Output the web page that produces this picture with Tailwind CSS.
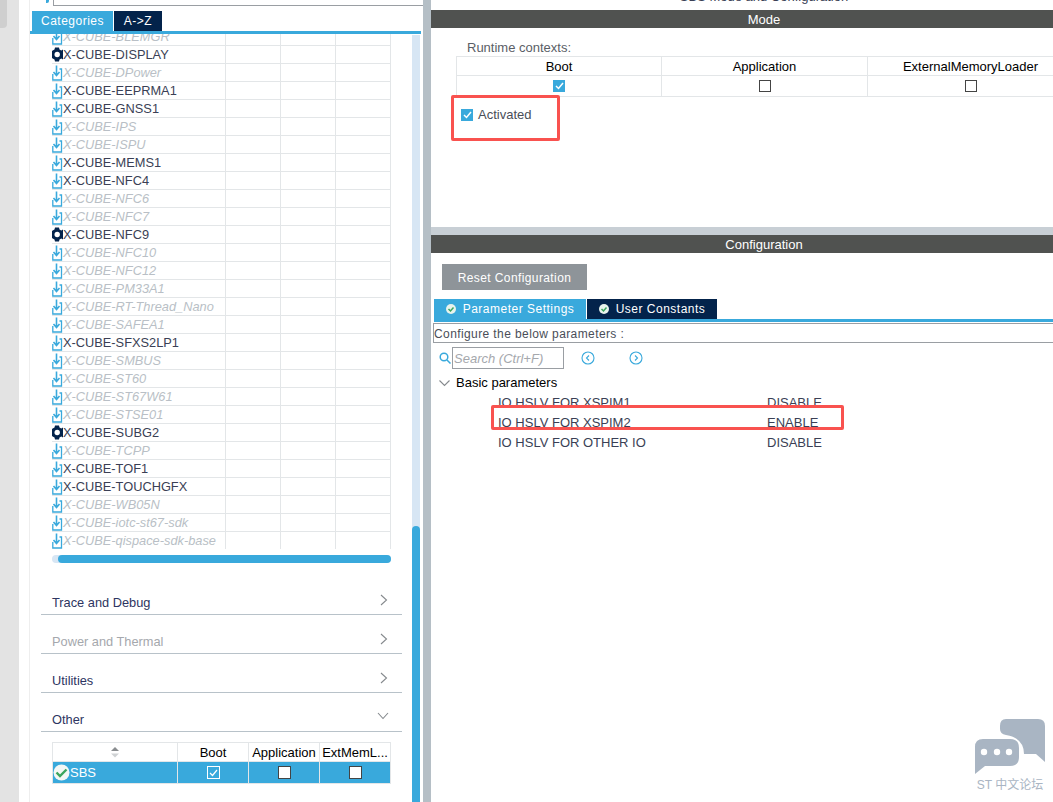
<!DOCTYPE html>
<html lang="en">
<head>
  <meta charset="UTF-8" />
  <title>SBS Mode and Configuration</title>
  <script src="https://cdn.jsdelivr.net/npm/@tailwindcss/browser@4"></script>
</head>
<body class="bg-white">
  <div class="relative flex h-[802px] w-[1053px] overflow-hidden bg-white text-[13px] text-[#3a3f55] font-['Liberation_Sans',Arial,sans-serif]">

    <!-- left gutter -->
    <div class="w-[19px] shrink-0 bg-[#e3e3e3]">
      <div class="h-[28px] w-[7px] rounded-br-[4px] bg-[#cfcfcf]"></div>
    </div>

    <!-- component panel -->
    <div class="relative w-[404px] shrink-0 bg-white">
      <div class="absolute left-[10px] top-0 h-full w-[1px] bg-[#eeeeee]"></div>
      <div class="absolute left-[27px] top-0 h-[3px] w-[3px] rounded-br-[2px] bg-[#39a9dc]"></div>
      <div class="ml-[34px] h-[6px] border-b border-l border-[#9a9ea3]"></div>

      <div class="ml-[13px] mt-[5px] flex h-[20px] gap-[1px] text-[12px] tracking-[0.5px] text-white">
        <div class="flex w-[81px] items-center justify-center bg-[#39a9dc]">Categories</div>
        <div class="flex w-[48px] items-center justify-center bg-[#03234b]">A-&gt;Z</div>
      </div>
      <div class="ml-[11px] h-[3px] w-[391px] bg-[#39a9dc]"></div>

      <div class="relative h-[515px] overflow-hidden">
        <div id="packs" class="ml-[33px] mt-[-6px] w-[339px]"></div>
        <div class="absolute right-[3px] top-[1px] h-full w-[8px] bg-[#d7e6f4]"></div>
      </div>

      <div class="ml-[33px] mt-[6px] h-[8px] w-[339px] rounded-[4px] bg-[#d7e6f4] pl-[6px]">
        <div class="h-full rounded-[4px] bg-[#39a9dc]"></div>
      </div>

      <div class="ml-[22px] mt-[24px] w-[361px] text-[12.8px]">
        <div class="flex h-[28px] items-center justify-between border-b border-[#b8c2c9] pb-[1px] pl-[11px] pr-[14px] pt-[6px] text-[#2d3561]">
          <span>Trace and Debug</span>
          <svg width="8" height="12" viewBox="0 0 8 12" fill="none" stroke="#85898d" stroke-width="1.1" class="mt-[-7px]"><path d="M1 1l5.5 5L1 11"/></svg>
        </div>
        <div class="mt-[11px] flex h-[28px] items-center justify-between border-b border-[#b8c2c9] pb-[1px] pl-[11px] pr-[14px] pt-[6px] text-[#a5a8ad]">
          <span>Power and Thermal</span>
          <svg width="8" height="12" viewBox="0 0 8 12" fill="none" stroke="#85898d" stroke-width="1.1" class="mt-[-7px]"><path d="M1 1l5.5 5L1 11"/></svg>
        </div>
        <div class="mt-[11px] flex h-[28px] items-center justify-between border-b border-[#b8c2c9] pb-[1px] pl-[11px] pr-[14px] pt-[6px] text-[#2d3561]">
          <span>Utilities</span>
          <svg width="8" height="12" viewBox="0 0 8 12" fill="none" stroke="#85898d" stroke-width="1.1" class="mt-[-7px]"><path d="M1 1l5.5 5L1 11"/></svg>
        </div>
        <div class="mt-[11px] flex h-[28px] items-center justify-between border-b border-[#b8c2c9] pb-[1px] pl-[11px] pr-[13px] pt-[6px] text-[#2d3561]">
          <span>Other</span>
          <svg width="12" height="8" viewBox="0 0 12 8" fill="none" stroke="#85898d" stroke-width="1.1" class="mt-[-8px]"><path d="M1 1l5 5.5L11 1"/></svg>
        </div>
      </div>

      <!-- runtime table for the selected component -->
      <div class="ml-[33px] mt-[10px] w-[339px] border border-[#e3e6e8] text-black">
        <div class="grid h-[19px] grid-cols-[125px_71px_71px_1fr] border-b border-[#e3e6e8]">
          <div class="flex items-center justify-center border-r border-[#e3e6e8]">
            <svg width="8" height="11" viewBox="0 0 8 11"><path d="M4 0l4 4H0z" fill="#8a8d90"/><path d="M0 6.500h8L4 10.500z" fill="#cfd2d4"/></svg>
          </div>
          <div class="flex items-center justify-center border-r border-[#e3e6e8]">Boot</div>
          <div class="flex items-center justify-center border-r border-[#e3e6e8]">Application</div>
          <div class="flex items-center justify-center">ExtMemL...</div>
        </div>
        <div class="grid h-[21px] grid-cols-[125px_71px_71px_1fr] bg-[#39a9dc]">
          <div class="flex items-center border-r border-[#e3e6e8] text-white">
            <svg width="17" height="17" viewBox="0 0 17 17" class="shrink-0"><circle cx="8.500" cy="8.500" r="8" fill="#f4f7f5"/><path d="M3.500 8.500l3.500 3.500 6.500-6.500" fill="none" stroke="#3ba55d" stroke-width="2.400"/></svg>
            <span>SBS</span>
          </div>
          <div class="flex items-center justify-center border-r border-[#e3e6e8]">
            <div class="flex h-[13px] w-[13px] items-center justify-center border border-white bg-[#39a9dc]">
              <svg width="9" height="8" viewBox="0 0 9 8" fill="none" stroke="#fff" stroke-width="1.200"><path d="M1 4l2.500 2.500L8 1"/></svg>
            </div>
          </div>
          <div class="flex items-center justify-center border-r border-[#e3e6e8]">
            <div class="h-[13px] w-[13px] border border-[#444] bg-white"></div>
          </div>
          <div class="flex items-center justify-center">
            <div class="h-[13px] w-[13px] border border-[#444] bg-white"></div>
          </div>
        </div>
      </div>

      <div class="absolute bottom-0 right-[3px] h-[276px] w-[8px] rounded-t-[4px] bg-[#39a9dc]"></div>
    </div>

    <!-- divider -->
    <div class="w-[7px] shrink-0 bg-[#b5bfc6]"></div>

    <!-- right side, wider than the window: its right edge is cut off -->
    <div class="relative w-[623px] shrink-0 overflow-hidden border-l border-[#b5bfc6] bg-white">
      <div class="w-[666px]">
        <div class="h-[10px] overflow-hidden text-center text-[13px] leading-[14px] text-[#3a3f55]"><div class="mt-[-10px]">SBS Mode and Configuration</div></div>
        <div class="flex h-[18px] items-center justify-center bg-[#505250] pt-[1px] text-white">Mode</div>

        <div class="ml-[36px] mt-[12px] h-[16px] leading-[16px] text-[#5a5e66]">Runtime contexts:</div>
        <div class="ml-[25px] w-[617px] border-y border-l border-[#e3e6e8] text-black">
          <div class="grid h-[19px] grid-cols-[205px_206px_1fr] border-b border-[#e3e6e8]">
            <div class="flex items-center justify-center border-r border-[#e3e6e8]">Boot</div>
            <div class="flex items-center justify-center border-r border-[#e3e6e8]">Application</div>
            <div class="flex items-center justify-center">ExternalMemoryLoader</div>
          </div>
          <div class="grid h-[20px] grid-cols-[205px_206px_1fr]">
            <div class="flex items-center justify-center border-r border-[#e3e6e8]">
              <div class="flex h-[12px] w-[12px] items-center justify-center bg-[#39a9dc]">
                <svg width="9" height="8" viewBox="0 0 9 8" fill="none" stroke="#fff" stroke-width="1.500"><path d="M1 4l2.500 2.500L8 1"/></svg>
              </div>
            </div>
            <div class="flex items-center justify-center border-r border-[#e3e6e8]">
              <div class="h-[12px] w-[12px] border border-[#444]"></div>
            </div>
            <div class="flex items-center justify-center">
              <div class="h-[12px] w-[12px] border border-[#444]"></div>
            </div>
          </div>
        </div>
        <div class="ml-[30px] mt-[11px] flex h-[14px] items-center gap-[5px] text-[#4a4e58]">
          <div class="flex h-[12px] w-[12px] items-center justify-center bg-[#39a9dc]">
            <svg width="9" height="8" viewBox="0 0 9 8" fill="none" stroke="#fff" stroke-width="1.500"><path d="M1 4l2.500 2.500L8 1"/></svg>
          </div>
          <span>Activated</span>
        </div>

        <div class="mt-[105px] h-[8px] bg-[#c8cfd5]"></div>
        <div class="flex h-[18px] items-center justify-center bg-[#505250] pt-[1px] text-white">Configuration</div>

        <div class="ml-[11px] mt-[11px] flex h-[26px] w-[145px] items-center justify-center bg-[#8e9499] pt-[1px] text-[12px] tracking-[0.4px] text-white">Reset Configuration</div>

        <div class="ml-[3px] mt-[9px] flex h-[20px] gap-[1px] text-[12px] tracking-[0.5px] text-white">
          <div class="flex w-[152px] items-center justify-center gap-[7px] bg-[#39a9dc]">
            <svg width="10" height="10" viewBox="0 0 10 10"><circle cx="5" cy="5" r="5" fill="#e8f3ec"/><path d="M2.500 5l2 2 3-3.500" fill="none" stroke="#3ba55d" stroke-width="1.500"/></svg>
            <span>Parameter Settings</span>
          </div>
          <div class="flex w-[130px] items-center justify-center gap-[7px] bg-[#03234b]">
            <svg width="10" height="10" viewBox="0 0 10 10"><circle cx="5" cy="5" r="5" fill="#e8f3ec"/><path d="M2.500 5l2 2 3-3.500" fill="none" stroke="#3ba55d" stroke-width="1.500"/></svg>
            <span>User Constants</span>
          </div>
        </div>
        <div class="ml-[3px] h-[3px] bg-[#39a9dc]"></div>

        <div class="ml-[2px] mt-[1px] flex h-[20px] items-center border border-r-0 border-[#9a9ea3] pt-[1px] text-[12px] tracking-[0.4px] text-[#4a4e58]">Configure the below parameters :</div>

        <div class="ml-[8px] mt-[4px] flex h-[22px] items-center">
          <svg width="12" height="12" viewBox="0 0 12 12" fill="none" stroke="#39a9dc" stroke-width="1.500"><circle cx="5" cy="5" r="3.800"/><path d="M8 8l3.500 3.500"/></svg>
          <div class="ml-[1px] flex h-[22px] w-[112px] items-center border border-[#9a9ea3] pl-[1px] pt-[1px] italic text-[#a5a8ad]">Search (Ctrl+F)</div>
          <svg width="14" height="14" viewBox="0 0 14 14" fill="none" stroke="#39a9dc" stroke-width="1.100" class="ml-[17px]"><circle cx="7" cy="7" r="6"/><path d="M8 4.500L5.500 7 8 9.500"/></svg>
          <svg width="14" height="14" viewBox="0 0 14 14" fill="none" stroke="#39a9dc" stroke-width="1.100" class="ml-[34px]"><circle cx="7" cy="7" r="6"/><path d="M6 4.500L8.500 7 6 9.500"/></svg>
        </div>

        <div class="ml-[8px] mt-[4px] flex h-[20px] items-center text-black">
          <svg width="11" height="7" viewBox="0 0 11 7" fill="none" stroke="#85898d" stroke-width="1.100"><path d="M0.500 0.500l5 5 5-5"/></svg>
          <span class="ml-[6px]">Basic parameters</span>
        </div>
        <div class="text-[#3a3f55]">
          <div class="grid h-[20px] grid-cols-[269px_1fr] items-center pl-[67px]"><span>IO HSLV FOR XSPIM1</span><span>DISABLE</span></div>
          <div class="grid h-[20px] grid-cols-[269px_1fr] items-center pl-[67px]"><span>IO HSLV FOR XSPIM2</span><span>ENABLE</span></div>
          <div class="grid h-[20px] grid-cols-[269px_1fr] items-center pl-[67px]"><span>IO HSLV FOR OTHER IO</span><span>DISABLE</span></div>
        </div>
      </div>
    </div>

    <!-- annotation boxes drawn over the screenshot -->
    <div class="absolute left-[451px] top-[95px] h-[46px] w-[109px] rounded-[2px] border-[3px] border-[#f9524f]"></div>
    <div class="absolute left-[491px] top-[405px] h-[25px] w-[353px] rounded-[2px] border-[3px] border-[#f9524f]"></div>

    <!-- forum watermark -->
    <div class="absolute left-[974px] top-[718px] flex w-[72px] flex-col items-center">
      <svg width="72" height="57" viewBox="0 0 72 57">
        <path d="M32 1h32q7 0 7 7v36l-9-8H50q0-16-18-19q-6-1-6-6V8q0-7 6-7z" fill="#a9b5c3"/>
        <path d="M9 21h27q9 0 9 9v9q0 9-9 9H11l-10 8V29q0-8 8-8z" fill="#a9b5c3"/>
        <circle cx="10" cy="34" r="3.200" fill="#fff"/><circle cx="23" cy="34" r="3.200" fill="#fff"/><circle cx="35" cy="34" r="3.200" fill="#fff"/>
      </svg>
      <div class="mt-[3px] whitespace-nowrap text-[12px] leading-[14px] text-[#a9b5c3] font-['Liberation_Sans','Noto_Sans_CJK_SC',sans-serif]">ST 中文论坛</div>
    </div>
  </div>

  <script>
    const packs = [
      ['X-CUBE-BLEMGR', 0], ['X-CUBE-DISPLAY', 2], ['X-CUBE-DPower', 0], ['X-CUBE-EEPRMA1', 1],
      ['X-CUBE-GNSS1', 1], ['X-CUBE-IPS', 0], ['X-CUBE-ISPU', 0], ['X-CUBE-MEMS1', 1],
      ['X-CUBE-NFC4', 1], ['X-CUBE-NFC6', 0], ['X-CUBE-NFC7', 0], ['X-CUBE-NFC9', 2],
      ['X-CUBE-NFC10', 0], ['X-CUBE-NFC12', 0], ['X-CUBE-PM33A1', 0], ['X-CUBE-RT-Thread_Nano', 0],
      ['X-CUBE-SAFEA1', 0], ['X-CUBE-SFXS2LP1', 1], ['X-CUBE-SMBUS', 0], ['X-CUBE-ST60', 0],
      ['X-CUBE-ST67W61', 0], ['X-CUBE-STSE01', 0], ['X-CUBE-SUBG2', 2], ['X-CUBE-TCPP', 0],
      ['X-CUBE-TOF1', 1], ['X-CUBE-TOUCHGFX', 1], ['X-CUBE-WB05N', 0], ['X-CUBE-iotc-st67-sdk', 0],
      ['X-CUBE-qispace-sdk-base', 0]
    ];
    const downloadIcon = '<svg width="11" height="16" viewBox="0 0 11 16" fill="none" stroke="#39a9dc" class="shrink-0"><path d="M4.500 0.500v9.500M1.500 7l3 3.500 3-3.500" stroke-width="1.600"/><path d="M0.800 9v6h8.700V4H7.500" stroke-width="1.300"/></svg>';
    const gearIcon = '<svg width="11" height="15" viewBox="0 0 11 15" class="shrink-0"><path d="M3 0.500h4l.5 2 1.800.9L11 2.500v10l-1.700-.9-1.800.9-.5 2H3l-.5-2-1.800-.9L0 11V4l.7-.6 1.800-.9z" fill="#03234b"/><circle cx="5.200" cy="7.500" r="2.700" fill="#fff"/></svg>';
    document.getElementById('packs').innerHTML = packs.map(([name, state]) => `
      <div class="grid h-[18px] grid-cols-[174px_55px_55px_55px] border-b border-[#e3e6e8]">
        <div class="flex items-center overflow-hidden whitespace-nowrap border-r border-[#e3e6e8] text-[12.8px] ${state ? 'text-[#3a3f55]' : 'italic text-[#b9bfc6]'}">
          ${state === 2 ? gearIcon : downloadIcon}<span>${name}</span>
        </div>
        <div class="border-r border-[#e3e6e8]"></div>
        <div class="border-r border-[#e3e6e8]"></div>
        <div class="border-r border-[#e3e6e8]"></div>
      </div>`).join('');
  </script>
</body>
</html>
